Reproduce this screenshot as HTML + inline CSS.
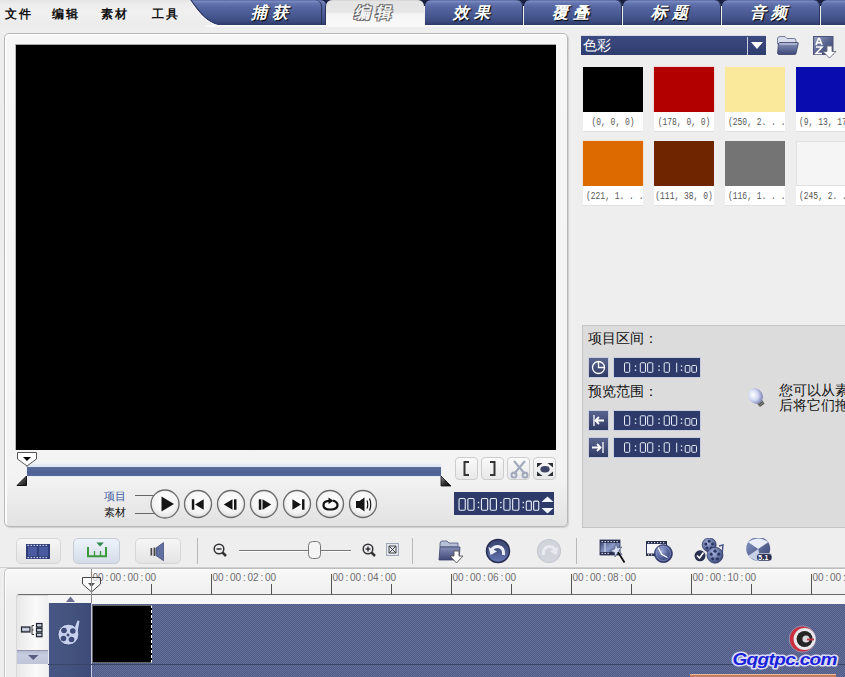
<!DOCTYPE html>
<html><head><meta charset="utf-8">
<style>
*{margin:0;padding:0;box-sizing:border-box}
html,body{width:845px;height:677px;overflow:hidden;background:#eeeeee;font-family:"Liberation Sans",sans-serif;position:relative}
.a{position:absolute}
#menubar{left:0;top:0;width:845px;height:33px;background:linear-gradient(#e4e4e4 0,#ececec 4px,#f0f0f0 12px,#ececec 24px,#efefef 33px)}
.menu{top:5.5px;font-size:12px;font-weight:bold;color:#111;letter-spacing:2px}
#tabbg{left:300px;top:0;width:545px;height:6px;background:#1a2040}
.tab{top:0;height:25px;width:98px;border-radius:6px 6px 0 0;background:linear-gradient(#4a5a90 0,#7e8ec6 1px,#6676b0 3px,#5666a2 7px,#4a5a94 14px,#3c4c82 21px,#2e3a68 25px);box-shadow:inset -1px 0 0 #2a3458;color:#fff;font-size:16px;font-weight:bold;font-style:italic;text-align:center;line-height:25px;letter-spacing:5px;text-shadow:1px 1px 1px #000}
.tab.act{background:linear-gradient(#cfcfcf 0,#e4e4e4 1px,#e6e6e6 12px,#f4f4f4 14px,#fafafa 25px);box-shadow:none;color:#f6f6f6;text-shadow:-1px -1px 0 #666,1px -1px 0 #666,-1px 1px 0 #666,1px 1px 0 #666}
#panel{left:4px;top:33px;width:564px;height:494px;background:linear-gradient(#f6f6f6 0,#f3f3f3 90%,#e2e2e2 100%);border:1px solid #b8b8b8;border-radius:5px;box-shadow:inset 1px 1px 0 #fff,inset 2px 2px 0 #fafafa,1px 1px 1px #cfcfcf}
#preview{left:15px;top:44px;width:541px;height:406px;background:#000;border-top:1px solid #a8a8a8;border-left:1px solid #b8b8b8}
#scrub{left:27px;top:467px;width:414px;height:10px;background:linear-gradient(#5a6c9c,#4e6094 60%,#56689a);border-bottom:1px solid #e4ecf8;box-shadow:0 -3px 2px #dde6f4}
.pbtn{width:28px;height:28px;border-radius:50%;border:1.5px solid #666;background:radial-gradient(circle at 50% 40%,#fff,#f0f0f0 60%,#ddd)}
.sqbtn{top:457px;width:23px;height:23px;border:1px solid #ccc;border-radius:4px;background:linear-gradient(#fafafa,#e8e8e8)}
.tcd{font-family:"Liberation Mono",monospace;font-size:14px;color:#e8eef8;line-height:15px;letter-spacing:0px}.tcd span{font-size:11px}
.tc{background:#2e3b6a;color:#dfe6f5;font-family:"Liberation Mono",monospace}
#rightbox{left:582px;top:325px;width:270px;height:203px;background:#dcdcdc;border:1px solid #c4c4c4;border-right:none}
.sw{width:60px;height:45px}
.lbl{width:60px;height:19px;background:#fff;font-family:"Liberation Mono",monospace;font-size:10.5px;color:#555;line-height:19px;text-align:center;white-space:nowrap;overflow:hidden;box-shadow:0 1px 0 #e0e0e0;position:absolute}.lbl span{position:absolute;top:1px;left:50%;transform:translateX(-50%) scaleX(.76)}.lbl.l span{left:3px;transform:scaleX(.76);transform-origin:0 0}
.tbtn{top:538px;width:45px;height:26px;border:1px solid #d6d6d6;border-radius:5px;background:linear-gradient(#f6f6f6,#e4e4e4)}
.sep{width:1px;height:26px;background:#b8b8b8;top:538px}
#ruler{left:4px;top:568px;width:845px;height:120px;background:linear-gradient(#f8f8f8,#eeeeee 30px,#ececec);border-top:1px solid #bdbdbd;border-left:1px solid #c4c4c4;border-radius:5px 0 0 0;box-shadow:inset 1px 1px 0 #fff}
.rt{top:573px;font-family:"Liberation Mono",monospace;font-size:11px;color:#555}
.tick{width:1px;background:#555}
#track{left:91px;top:603px;width:754px;height:74px;background:repeating-conic-gradient(#636f9a 0 25%,#505c86 0 50%) 0 0/2px 2px;border-top:1px solid #46527c}
</style></head><body>
<div id="menubar" class="a"></div>
<div class="a menu" style="left:5px">文件</div>
<div class="a menu" style="left:52px">编辑</div>
<div class="a menu" style="left:101px">素材</div>
<div class="a menu" style="left:151.5px">工具</div>
<div id="tabbg" class="a"></div>
<svg class="a" style="left:185px;top:0" width="145" height="26"><defs><linearGradient id="tabg" x1="0" y1="0" x2="0" y2="1"><stop offset="0" stop-color="#4a5a90"/><stop offset=".04" stop-color="#7e8ec6"/><stop offset=".12" stop-color="#6676b0"/><stop offset=".3" stop-color="#5666a2"/><stop offset=".56" stop-color="#4a5a94"/><stop offset=".84" stop-color="#3c4c82"/><stop offset="1" stop-color="#2e3a68"/></linearGradient></defs><path d="M5.7 0 H135 Q141 0 141 6 V25 H34.8 C20 22 12 8 5.7 0Z" fill="url(#tabg)"/><path d="M5.7 0 C12 8 20 22 34.8 25" fill="none" stroke="#2a3466" stroke-width="1.2"/><path d="M4.5 0.3 C11 8.5 19 23 34.8 26" fill="none" stroke="#fff" stroke-width="1" opacity=".9"/><path d="M140.5 5 V25" stroke="#2a3458"/></svg>
<div class="a tab" style="left:222px;width:100px;background:none">捕获</div>
<div class="a tab act" style="left:326px">编辑</div>
<div class="a tab" style="left:425px">效果</div>
<div class="a tab" style="left:524px">覆叠</div>
<div class="a tab" style="left:623px">标题</div>
<div class="a tab" style="left:722px">音频</div>
<div class="a tab" style="left:821px;width:40px"></div>
<div class="a" style="left:205px;top:25px;width:640px;height:2px;background:#f8f8f8"></div>

<div id="panel" class="a"></div>
<div id="preview" class="a"></div>
<div id="scrub" class="a"></div>


<!-- playhead marker -->
<svg class="a" style="left:16px;top:451px" width="22" height="36">
<path d="M1.5 1.5 H20.5 V8 L11 15 L1.5 8Z" fill="#fff" stroke="#555" stroke-width="1"/>
<path d="M7 6 H15 L11 10Z" fill="#000"/>
<path d="M11 15 V16" stroke="#777"/>
<defs><linearGradient id="tg" x1="0" y1="0" x2="1" y2="1"><stop offset="0" stop-color="#888"/><stop offset="1" stop-color="#111"/></linearGradient></defs><path d="M1 34.5 L10.5 25 V34.5Z" fill="url(#tg)" stroke="#111" stroke-width="1"/>
</svg>
<svg class="a" style="left:438px;top:474px" width="16" height="14"><defs><linearGradient id="tg2" x1="0" y1="0" x2="1" y2="1"><stop offset="0" stop-color="#999"/><stop offset=".5" stop-color="#333"/><stop offset="1" stop-color="#000"/></linearGradient></defs><path d="M3 2 L13 12 H3Z" fill="url(#tg2)" stroke="#111" stroke-width=".8"/></svg>
<!-- project/clip labels -->
<div class="a" style="left:104px;top:490px;font-size:11px;color:#3a5aa0;line-height:13px">项目</div>
<div class="a" style="left:104px;top:506px;font-size:11px;color:#111;line-height:13px">素材</div>
<div class="a" style="left:135px;top:495px;width:20px;height:1px;background:#666"></div>
<div class="a" style="left:135px;top:513px;width:20px;height:1px;background:#666"></div>
<!-- play buttons -->
<svg class="a" style="left:148px;top:487px" width="240" height="34">
<defs><radialGradient id="pg" cx="50%" cy="40%" r="60%"><stop offset="0" stop-color="#fff"/><stop offset=".7" stop-color="#f4f4f4"/><stop offset="1" stop-color="#dcdcdc"/></radialGradient></defs>
<g stroke="#6a6a6a" stroke-width="1.3" fill="url(#pg)">
<circle cx="17" cy="17" r="14"/><circle cx="50" cy="17" r="13.5"/><circle cx="83" cy="17" r="13.5"/><circle cx="116" cy="17" r="13.5"/><circle cx="149" cy="17" r="13.5"/><circle cx="182" cy="17" r="13.5"/><circle cx="215" cy="17" r="13.5"/>
</g>
<g fill="#151515">
<path d="M13.5 9.5 L26 17 L13.5 24.5Z"/>
<path d="M43.8 12.2 H46.3 V22.8 H43.8Z M47 17.5 L55.7 12.2 V22.8Z"/>
<path d="M75.8 17.5 L84.5 12.2 V22.8Z M86 12.2 H88.5 V22.8 H86Z"/>
<path d="M110.8 12.2 H113.3 V22.8 H110.8Z M114.5 12.2 L123.2 17.5 L114.5 22.8Z"/>
<path d="M144.4 12.2 L153 17.5 L144.4 22.8Z M154 12.2 H156.5 V22.8 H154Z"/>
<path d="M208 14 H211.5 L216.5 10.5 V24.5 L211.5 21 H208Z"/>
</g>
<g fill="none" stroke="#151515">
<path d="M185 13.5 Q189.5 15 189.5 18 Q189.5 22.5 182 22.5 Q175.5 22.5 175.5 18 Q175.5 14 181 13.8" stroke-width="2.2"/>
<path d="M180.5 10.5 L185.5 13.8 L180.5 17Z" fill="#151515" stroke="none"/>
<path d="M219 13.5 Q220.5 17.5 219 21.5 M221.5 11.5 Q224 17.5 221.5 23.5" stroke-width="1.2"/>
</g>
</svg>
<!-- square buttons -->
<div class="a sqbtn" style="left:455px"></div>
<div class="a sqbtn" style="left:481px"></div>
<div class="a sqbtn" style="left:507px"></div>
<div class="a sqbtn" style="left:533px"></div>
<svg class="a" style="left:455px;top:457px" width="102" height="23">
<path d="M14 5 H9.5 V18 H14" fill="none" stroke="#333" stroke-width="2"/>
<path d="M35 5 H39.5 V18 H35" fill="none" stroke="#333" stroke-width="2"/>
<g stroke="#a0a8bc" stroke-width="2" fill="none"><path d="M59 4 L70 17 M70 4 L59 17"/><circle cx="59" cy="18" r="2.5"/><circle cx="70" cy="18" r="2.5"/></g>
<path d="M82 6 H87.5 L82 10.5Z M98 6 H92.5 L98 10.5Z M82 19 H87.5 L82 14.5Z M98 19 H92.5 L98 14.5Z" fill="#2c3038"/><ellipse cx="90" cy="12.3" rx="4.6" ry="3.3" fill="#3e4468"/>
</svg>
<!-- timecode -->
<div class="a tc" style="left:454px;top:492px;width:100px;height:23px"></div>

<svg class="a" style="left:540px;top:494px" width="14" height="22"><path d="M1.5 8 L7.5 2.5 L13.5 8Z M1.5 14 L7.5 19.5 L13.5 14Z" fill="#f2f5fb"/></svg>


<!-- dropdown -->
<div class="a" style="left:581px;top:35px;width:185px;height:20px;background:linear-gradient(#3c4a80,#2f3c6e);border-top:1px solid #d8dce8"></div>
<div class="a" style="left:583px;top:36px;font-size:14px;color:#fff;line-height:19px">色彩</div>
<div class="a" style="left:747px;top:37px;width:1px;height:18px;background:#c8cde0"></div>
<svg class="a" style="left:748px;top:36px" width="19" height="19"><path d="M3 6 H15 L9 13Z" fill="#fff"/></svg>
<!-- folder icon -->
<svg class="a" style="left:776px;top:35px" width="24" height="21">
<defs><linearGradient id="fg" x1="0" y1="0" x2="0" y2="1"><stop offset="0" stop-color="#8a94bc"/><stop offset="1" stop-color="#3e4878"/></linearGradient></defs>
<path d="M1.5 4 Q1.5 1.5 4 1.5 H9 L11 3.5 H18 Q20 3.5 20 5.5 V9 H1.5Z" fill="#d8dcec" stroke="#5a6088" stroke-width=".8"/>
<path d="M1.5 18.5 L2.5 8.5 Q3 7.5 4 7.5 H21.5 Q22.5 7.5 22.3 8.5 L20 18.5 Q19.8 19.5 18.8 19.5 H2.5Z" fill="url(#fg)" stroke="#3a4068" stroke-width=".8"/>
<path d="M3.5 9 H21" stroke="#e8ecf8" stroke-width=".8"/>
</svg>
<!-- sort icon -->
<svg class="a" style="left:812px;top:35px" width="26" height="24">
<defs><linearGradient id="sg" x1="0" y1="0" x2="1" y2="1"><stop offset="0" stop-color="#9aa2c0"/><stop offset=".5" stop-color="#5a6490"/><stop offset="1" stop-color="#3a4470"/></linearGradient></defs>
<rect x="1.5" y="1.5" width="19.5" height="18" fill="url(#sg)" stroke="#4a5278"/>
<path d="M4 10 L6.5 3.5 H7.5 L10 10 M5 7.8 H9" fill="none" stroke="#fff" stroke-width="1.6"/>
<path d="M4 12 H10 L4 18.5 H10" fill="none" stroke="#fff" stroke-width="1.6"/>
<path d="M15 11 H20 V16.5 H24 L17.5 23 L11 16.5 H15Z" fill="#fff" stroke="#6a6a80" stroke-width=".9"/>
</svg>
<!-- swatches -->
<div class="a sw" style="left:583px;top:67px;background:#000"></div>
<div class="a sw" style="left:654px;top:67px;background:#b20000;box-shadow:0 0 2px #f0b0b0"></div>
<div class="a sw" style="left:725px;top:67px;background:#fae99a"></div>
<div class="a sw" style="left:796px;top:67px;background:#090daf"></div>
<div class="a lbl" style="left:583px;top:112px"><span>(0, 0, 0)</span></div>
<div class="a lbl" style="left:654px;top:112px"><span>(178, 0, 0)</span></div>
<div class="a lbl l" style="left:725px;top:112px"><span>(250, 2. . .</span></div>
<div class="a lbl l" style="left:796px;top:112px"><span>(9, 13, 17</span></div>
<div class="a sw" style="left:583px;top:141px;background:#dd6a00;box-shadow:0 0 2px #f8c890"></div>
<div class="a sw" style="left:654px;top:141px;background:#6f2600"></div>
<div class="a sw" style="left:725px;top:141px;background:#747474"></div>
<div class="a sw" style="left:796px;top:141px;background:#f5f5f5;border:1px solid #e2e2e2"></div>
<div class="a lbl l" style="left:583px;top:186px"><span>(221, 1. . .</span></div>
<div class="a lbl" style="left:654px;top:186px"><span>(111, 38, 0)</span></div>
<div class="a lbl l" style="left:725px;top:186px"><span>(116, 1. . .</span></div>
<div class="a lbl l" style="left:796px;top:186px"><span>(245, 2. . .</span></div>

<div id="rightbox" class="a"></div>
<div class="a" style="left:588px;top:330px;font-size:14px;color:#111;line-height:16px">项目区间：</div>
<div class="a" style="left:588px;top:383px;font-size:14px;color:#111;line-height:16px">预览范围：</div>
<svg class="a" style="left:588px;top:357px" width="21" height="102">
<defs><linearGradient id="ig" x1="0" y1="0" x2="0" y2="1"><stop offset="0" stop-color="#5a6690"/><stop offset="1" stop-color="#2e3a64"/></linearGradient></defs>
<g stroke="#c8cde0" stroke-width="1" fill="url(#ig)"><rect x=".5" y=".5" width="20" height="20"/><rect x=".5" y="53.5" width="20" height="20"/><rect x=".5" y="80.5" width="20" height="20"/></g>
<g fill="none" stroke="#fff" stroke-width="1.3"><circle cx="10.5" cy="10.5" r="6"/><path d="M10.5 5 V10.5 H16"/>
<path d="M6 58 V69"/><path d="M16 63.5 H8 M11 60 L7.5 63.5 L11 67" stroke-width="1.8"/>
<path d="M15 85 V96"/><path d="M4 90.5 H12 M9 87 L12.5 90.5 L9 94" stroke-width="1.8"/></g>
</svg>
<div class="a tc" style="left:613px;top:357px;width:88px;height:21px;border:1px solid #c8cde0"></div>
<div class="a tc" style="left:613px;top:410px;width:88px;height:21px;border:1px solid #c8cde0"></div>
<div class="a tc" style="left:613px;top:437px;width:88px;height:21px;border:1px solid #c8cde0"></div>
<svg class="a" style="left:0;top:0" width="845" height="677"><g fill="none" stroke="#e8eef8" stroke-width="1.1"><rect x="459.05" y="498.55" width="6.20" height="11.70" rx="1.17"/><rect x="467.85" y="498.55" width="6.20" height="11.70" rx="1.17"/><rect x="481.45" y="498.55" width="6.20" height="11.70" rx="1.17"/><rect x="490.25" y="498.55" width="6.20" height="11.70" rx="1.17"/><rect x="503.85" y="498.55" width="6.20" height="11.70" rx="1.17"/><rect x="512.65" y="498.55" width="6.20" height="11.70" rx="1.17"/><rect x="526.25" y="501.15" width="5.10" height="9.10" rx="0.99"/><rect x="533.65" y="501.15" width="5.10" height="9.10" rx="0.99"/></g><g fill="#e8eef8"><rect x="477.80" y="501.84" width="1.4" height="1.4"/><rect x="477.80" y="506.70" width="1.4" height="1.4"/><rect x="500.20" y="501.84" width="1.4" height="1.4"/><rect x="500.20" y="506.70" width="1.4" height="1.4"/><rect x="522.60" y="501.84" width="1.4" height="1.4"/><rect x="522.60" y="506.70" width="1.4" height="1.4"/></g><g fill="none" stroke="#e8eef8" stroke-width="1.0"><rect x="624.50" y="362.80" width="5.20" height="9.50" rx="0.99"/><rect x="640.30" y="362.80" width="5.20" height="9.50" rx="0.99"/><rect x="647.60" y="362.80" width="5.20" height="9.50" rx="0.99"/><rect x="664.20" y="362.80" width="5.20" height="9.50" rx="0.99"/><path d="M676.70 362.80 V372.30"/><rect x="685.20" y="365.50" width="4.70" height="6.80" rx="0.91"/><rect x="691.80" y="365.50" width="4.70" height="6.80" rx="0.91"/></g><g fill="#e8eef8"><rect x="634.85" y="365.45" width="1.4" height="1.4"/><rect x="634.85" y="369.44" width="1.4" height="1.4"/><rect x="658.35" y="365.45" width="1.4" height="1.4"/><rect x="658.35" y="369.44" width="1.4" height="1.4"/><rect x="680.80" y="365.45" width="1.4" height="1.4"/><rect x="680.80" y="369.44" width="1.4" height="1.4"/></g><g fill="none" stroke="#e8eef8" stroke-width="1.0"><rect x="624.50" y="415.80" width="5.20" height="9.50" rx="0.99"/><rect x="640.30" y="415.80" width="5.20" height="9.50" rx="0.99"/><rect x="647.60" y="415.80" width="5.20" height="9.50" rx="0.99"/><rect x="664.20" y="415.80" width="5.20" height="9.50" rx="0.99"/><rect x="671.50" y="415.80" width="5.20" height="9.50" rx="0.99"/><rect x="685.20" y="418.50" width="4.70" height="6.80" rx="0.91"/><rect x="691.80" y="418.50" width="4.70" height="6.80" rx="0.91"/></g><g fill="#e8eef8"><rect x="634.85" y="418.45" width="1.4" height="1.4"/><rect x="634.85" y="422.44" width="1.4" height="1.4"/><rect x="658.35" y="418.45" width="1.4" height="1.4"/><rect x="658.35" y="422.44" width="1.4" height="1.4"/><rect x="680.80" y="418.45" width="1.4" height="1.4"/><rect x="680.80" y="422.44" width="1.4" height="1.4"/></g><g fill="none" stroke="#e8eef8" stroke-width="1.0"><rect x="624.50" y="442.80" width="5.20" height="9.50" rx="0.99"/><rect x="640.30" y="442.80" width="5.20" height="9.50" rx="0.99"/><rect x="647.60" y="442.80" width="5.20" height="9.50" rx="0.99"/><rect x="664.20" y="442.80" width="5.20" height="9.50" rx="0.99"/><path d="M676.70 442.80 V452.30"/><rect x="685.20" y="445.50" width="4.70" height="6.80" rx="0.91"/><rect x="691.80" y="445.50" width="4.70" height="6.80" rx="0.91"/></g><g fill="#e8eef8"><rect x="634.85" y="445.45" width="1.4" height="1.4"/><rect x="634.85" y="449.44" width="1.4" height="1.4"/><rect x="658.35" y="445.45" width="1.4" height="1.4"/><rect x="658.35" y="449.44" width="1.4" height="1.4"/><rect x="680.80" y="445.45" width="1.4" height="1.4"/><rect x="680.80" y="449.44" width="1.4" height="1.4"/></g></svg>
<svg class="a" style="left:745px;top:385px" width="24" height="26">
<defs><radialGradient id="bg1" cx="40%" cy="35%" r="65%"><stop offset="0" stop-color="#ffffff"/><stop offset=".55" stop-color="#d0d8f4"/><stop offset="1" stop-color="#8088b8"/></radialGradient></defs>
<g transform="rotate(-35 12 13)">
<rect x="9" y="17" width="6" height="5" rx="1" fill="#555"/>
<path d="M9 18.5 H15 M9 20.5 H15" stroke="#999" stroke-width=".7"/>
<ellipse cx="12" cy="10.5" rx="7" ry="8" fill="url(#bg1)"/>
</g>
</svg>
<div class="a" style="left:779px;top:383px;font-size:14px;color:#111;line-height:15px;white-space:nowrap">您可以从素<br>后将它们拖</div>



<!-- bottom toolbar -->
<div class="a tbtn" style="left:16px;width:45px"></div>
<div class="a tbtn" style="left:73px;width:47px;background:linear-gradient(#eef3fa,#d4dce8);border-color:#c4ccd8"></div>
<div class="a tbtn" style="left:135px;width:46px"></div>
<svg class="a" style="left:16px;top:538px" width="170" height="26">
<rect x="10" y="6" width="24" height="15" fill="#2e3c78"/>
<rect x="12" y="9" width="9" height="9" fill="#4a5aa0"/><rect x="23" y="9" width="9" height="9" fill="#4a5aa0"/>
<g fill="#c8d0f0"><rect x="11.5" y="6.8" width="1.6" height="1.3"/><rect x="14.5" y="6.8" width="1.6" height="1.3"/><rect x="17.5" y="6.8" width="1.6" height="1.3"/><rect x="20.5" y="6.8" width="1.6" height="1.3"/><rect x="23.5" y="6.8" width="1.6" height="1.3"/><rect x="26.5" y="6.8" width="1.6" height="1.3"/><rect x="29.5" y="6.8" width="1.6" height="1.3"/>
<rect x="11.5" y="18.9" width="1.6" height="1.3"/><rect x="14.5" y="18.9" width="1.6" height="1.3"/><rect x="17.5" y="18.9" width="1.6" height="1.3"/><rect x="20.5" y="18.9" width="1.6" height="1.3"/><rect x="23.5" y="18.9" width="1.6" height="1.3"/><rect x="26.5" y="18.9" width="1.6" height="1.3"/><rect x="29.5" y="18.9" width="1.6" height="1.3"/></g>
<path d="M72 9 V18.2 H90 V9" fill="none" stroke="#3a9a3a" stroke-width="2"/>
<path d="M78.5 13 V18 M84.5 13 V18" stroke="#3a9a3a" stroke-width="1.3"/>
<path d="M80.4 4.6 H87.8 L84.1 8.5Z" fill="#2a8a4a"/>
<path d="M134.5 10 H136.2 V17.5 H134.5Z M137.6 9.5 H139.3 V18 H137.6Z" fill="#444"/>
<path d="M140 10 L147.5 4.6 V22.7 L140 17.5Z" fill="#6070a0" stroke="#3a4670" stroke-width=".7"/>
</svg>
<div class="a sep" style="left:197px"></div>
<div class="a sep" style="left:412px"></div>
<div class="a sep" style="left:576px"></div>
<svg class="a" style="left:210px;top:540px" width="195" height="22">
<g fill="none" stroke="#333"><circle cx="9" cy="9" r="4.8" stroke-width="1.5" fill="#f0f0f4"/><path d="M12.5 12.5 L16 16" stroke-width="2.5"/><path d="M6.5 9 H11.5" stroke-width="1.5"/></g>
<g fill="none" stroke="#333"><circle cx="158" cy="9" r="4.8" stroke-width="1.5" fill="#f0f0f4"/><path d="M161.5 12.5 L165 16" stroke-width="2.5"/><path d="M155.5 9 H160.5 M158 6.5 V11.5" stroke-width="1.5"/></g>
<path d="M29 10.5 H141" stroke="#777" stroke-width="1"/><path d="M29 11.5 H141" stroke="#fff" stroke-width="1"/>
<rect x="98.5" y="1.5" width="12" height="17" rx="4" fill="#f4f4f4" stroke="#777"/>
<rect x="176.5" y="3.5" width="12" height="12" fill="#e4e8f0" stroke="#a0a8b8"/>
<path d="M179 6 H186 V13 H179Z M179 6 L186 13 M186 6 L179 13" fill="none" stroke="#333" stroke-width=".9"/>
</svg>
<!-- right toolbar icons -->
<svg class="a" style="left:436px;top:538px" width="345" height="28">
<defs>
<linearGradient id="fg2" x1="0" y1="0" x2="0" y2="1"><stop offset="0" stop-color="#8890b8"/><stop offset="1" stop-color="#3e4878"/></linearGradient>
<linearGradient id="ug" x1="0" y1="0" x2="0" y2="1"><stop offset="0" stop-color="#3a4470"/><stop offset=".5" stop-color="#4a5888"/><stop offset="1" stop-color="#6878b8"/></linearGradient>
</defs>
<path d="M4 6 Q4 3 6 3 H11 L13 5 H22 V9 H4Z" fill="#b8c0d8" stroke="#4a5478" stroke-width=".8"/>
<path d="M3 22 L4 9 H24 L23 22Z" fill="url(#fg2)" stroke="#3a4468" stroke-width=".8"/>
<path d="M18 13 H23 V18 H27 L20.5 25 L14 18 H18Z" fill="#fff" stroke="#555" stroke-width=".9"/>
<circle cx="62" cy="13" r="11.5" fill="url(#ug)" stroke="#262c50" stroke-width="1.5"/>
<path d="M67.5 17 Q68.5 9.5 62 8.5 Q58 8.3 56 11.5" fill="none" stroke="#eef0f8" stroke-width="3"/>
<path d="M52.5 9 L54.5 17 L61 13.5Z" fill="#eef0f8"/>
<circle cx="113" cy="13" r="11.5" fill="#d2d4dc" stroke="#c6c8d0" stroke-width="1.2"/>
<path d="M107.5 17 Q106.5 9.5 113 8.5 Q117 8.3 119 11.5" fill="none" stroke="#e8eaf0" stroke-width="3"/>
<path d="M122.5 9 L120.5 17 L114 13.5Z" fill="#e8eaf0"/>
<defs>
<linearGradient id="fm1" x1="0" y1="0" x2="1" y2="1"><stop offset="0" stop-color="#3a4670"/><stop offset=".5" stop-color="#8a9ac8"/><stop offset="1" stop-color="#3a4670"/></linearGradient>
<radialGradient id="clk" cx="40%" cy="35%" r="70%"><stop offset="0" stop-color="#9aa8d8"/><stop offset=".6" stop-color="#4a5890"/><stop offset="1" stop-color="#2a3468"/></radialGradient>
<radialGradient id="reel" cx="40%" cy="35%" r="70%"><stop offset="0" stop-color="#aab4e0"/><stop offset=".7" stop-color="#5a6898"/><stop offset="1" stop-color="#34406c"/></radialGradient>
<linearGradient id="dsk" x1="0" y1="0" x2="1" y2="1"><stop offset="0" stop-color="#8a98c8"/><stop offset="1" stop-color="#34406c"/></linearGradient>
</defs>
<rect x="164" y="2" width="20" height="15" fill="url(#fm1)" stroke="#2a3050" stroke-width=".8"/>
<rect x="164" y="2" width="20" height="3" fill="#2a3050"/><rect x="164" y="14" width="20" height="3" fill="#2a3050"/>
<g fill="#e8ecf8"><rect x="165.5" y="3" width="1.3" height="1.2"/><rect x="168.5" y="3" width="1.3" height="1.2"/><rect x="171.5" y="3" width="1.3" height="1.2"/><rect x="174.5" y="3" width="1.3" height="1.2"/><rect x="177.5" y="3" width="1.3" height="1.2"/><rect x="180.5" y="3" width="1.3" height="1.2"/>
<rect x="165.5" y="14.8" width="1.3" height="1.2"/><rect x="168.5" y="14.8" width="1.3" height="1.2"/><rect x="171.5" y="14.8" width="1.3" height="1.2"/></g>
<path d="M169 5 V14" stroke="#c8d0f0" stroke-width="1.2"/>
<path d="M180 5 L181.5 10 L186 9 L183 12.5 L186 16.5 L181.5 15 L179 19 L178.5 14.5 L174 13 L178.5 11Z" fill="#d8e0f8" stroke="#4a5478" stroke-width=".7"/>
<path d="M182 14 L188.5 24.5" stroke="#111" stroke-width="1.8"/>
<rect x="210.5" y="3.5" width="20" height="14" fill="#f4f6fc" stroke="#2a3050" stroke-width="1"/>
<rect x="210.5" y="3.5" width="20" height="2.5" fill="#2a3050"/><rect x="210.5" y="15.5" width="20" height="2.5" fill="#2a3050"/>
<g fill="#f0f0f8"><rect x="212" y="4.2" width="1.2" height="1"/><rect x="215" y="4.2" width="1.2" height="1"/><rect x="218" y="4.2" width="1.2" height="1"/><rect x="221" y="4.2" width="1.2" height="1"/><rect x="224" y="4.2" width="1.2" height="1"/><rect x="227" y="4.2" width="1.2" height="1"/><rect x="212" y="16.3" width="1.2" height="1"/><rect x="215" y="16.3" width="1.2" height="1"/></g>
<circle cx="227.4" cy="15.6" r="9" fill="url(#clk)" stroke="#2a3060" stroke-width=".8"/>
<circle cx="227.4" cy="15.6" r="7" fill="none" stroke="#c8d0f0" stroke-width=".6" opacity=".7"/>
<path d="M222 9.5 L226 16.5 L231.5 19.5" fill="none" stroke="#fff" stroke-width="1.3"/>
<circle cx="273.2" cy="6.8" r="7" fill="url(#reel)" stroke="#2a3460" stroke-width=".7"/>
<g fill="#2a3460"><circle cx="273.2" cy="3.3" r="1.5"/><circle cx="276.5" cy="6" r="1.5"/><circle cx="275.2" cy="10" r="1.5"/><circle cx="271" cy="10" r="1.5"/><circle cx="269.8" cy="6" r="1.5"/></g>
<path d="M283 8 L287 7 L286 16" fill="none" stroke="#4a5688" stroke-width="1.5"/>
<circle cx="279" cy="17.2" r="8" fill="url(#reel)" stroke="#2a3460" stroke-width=".7"/>
<g fill="#2a3460"><circle cx="279" cy="13.2" r="1.6"/><circle cx="282.8" cy="16.2" r="1.6"/><circle cx="281.3" cy="20.8" r="1.6"/><circle cx="276.7" cy="20.8" r="1.6"/><circle cx="275.2" cy="16.2" r="1.6"/></g>
<circle cx="264" cy="17.8" r="5.5" fill="#2a3050"/>
<path d="M261 17.5 L263.5 20 L267.5 14.5" fill="none" stroke="#fff" stroke-width="1.6"/>
<circle cx="322.2" cy="10.8" r="12" fill="url(#dsk)"/>
<path d="M312 4 Q322.2 -3 332.4 4 L322.2 11Z" fill="#e8ecf8"/>
<path d="M312 18 L322.2 11 L325 22.8 Q317 23 312 18Z" fill="#c8d0e8"/>
<rect x="320.6" y="15.6" width="15.4" height="7.5" rx="3" fill="#2a3050" stroke="#e8ecf8" stroke-width=".7"/>
<text x="322.3" y="21.6" font-family="Liberation Sans" font-weight="bold" font-size="7" fill="#fff" letter-spacing=".2">5.1</text>
</svg>
<div class="a" style="left:0;top:567px;width:845px;height:1px;background:#d0d0d0"></div>
<div id="ruler" class="a"></div>
<div id="track" class="a"></div>
<div class="a" style="left:16px;top:594px;width:829px;height:10px;background:#f6f6f6;border-top:1px solid #6a6a6a;border-left:1px solid #c8c8c8;border-radius:4px 0 0 0"></div>
<div class="a" style="left:16px;top:595px;width:32px;height:82px;background:linear-gradient(90deg,#e8e8e8,#fafafa 60%,#f0f0f0);border-left:1px solid #d8d8d8;border-top:1px solid #ddd;border-radius:3px 0 0 0"></div>
<div class="a" style="left:17px;top:650px;width:31px;height:14px;background:linear-gradient(#b8bcd0,#c8cce0 30%,#c0c4d8);border-top:1px solid #9094a8"></div>
<svg class="a" style="left:17px;top:596px" width="75" height="81">
<path d="M49 6 L53.5 0.5 L58 6Z" fill="#6a6e90"/>
<path d="M11 59 H21.5 L16.25 64Z" fill="#5a5e80"/>
<defs><linearGradient id="hg" x1="0" y1="0" x2="0" y2="1"><stop offset="0" stop-color="#9aa0b0"/><stop offset=".5" stop-color="#d8dce8"/><stop offset="1" stop-color="#7a8090"/></linearGradient></defs>
<rect x="4.5" y="31" width="8.5" height="5" fill="url(#hg)" stroke="#1e2430" stroke-width="1.2"/>
<path d="M17 29.5 H15 V38.5 H17 M15 34 H16.5" fill="none" stroke="#222" stroke-width=".9"/>
<rect x="19.5" y="27.5" width="5.5" height="3.6" fill="url(#hg)" stroke="#1e2430" stroke-width="1.2"/>
<rect x="19.5" y="32.3" width="5.5" height="3.6" fill="url(#hg)" stroke="#1e2430" stroke-width="1.2"/>
<rect x="19.5" y="37.1" width="5.5" height="3.6" fill="url(#hg)" stroke="#1e2430" stroke-width="1.2"/>
</svg>
<div class="a" style="left:48px;top:603px;width:43px;height:74px;background:linear-gradient(90deg,#485684,#44527e 50%,#3e4b78);border-left:1px solid #e8e8f0"></div><div class="a" style="left:91px;top:603px;width:1px;height:74px;background:#c8cce0"></div>
<div class="a" style="left:48px;top:664px;width:797px;height:1px;background:#3a4468"></div>
<svg class="a" style="left:48px;top:603px" width="43" height="60">
<circle cx="20.4" cy="31.6" r="10.4" fill="#c8d2f0" stroke="#34406a" stroke-width=".8"/>
<g fill="#3e4a78"><circle cx="16" cy="27.5" r="2.8"/><circle cx="24.8" cy="28" r="2.8"/><circle cx="15.5" cy="35.5" r="2.8"/><circle cx="23.5" cy="36.5" r="2.8"/><circle cx="20" cy="32" r="1.5"/></g>
<path d="M27 24 L29.5 17.5 L31.5 18 L29.5 29Z" fill="#c8d2f0"/>
</svg>
<div class="a" style="left:92px;top:605px;width:60px;height:58px;background:#000;border:1px solid #666;border-right:1.5px dashed #fff"></div>
<!-- ruler ticks and labels -->
<svg class="a" style="left:0;top:569px" width="845" height="34">
<g stroke="#555" stroke-width="1">
<path d="M91.5 5 V26 M211.5 5 V26 M331.5 5 V26 M451.5 5 V26 M571.5 5 V26 M691.5 5 V26 M811.5 5 V26"/>
<path d="M151.5 15 V26 M271.5 15 V26 M391.5 15 V26 M511.5 15 V26 M631.5 15 V26 M751.5 15 V26"/>
</g>
<g font-family="Liberation Sans" font-size="10" fill="#6e6e6e"><text x="92.5 98.0 105.4 109.9 115.4 122.9 127.4 132.9 140.4 144.9 150.4" y="12.4">00:00:00:00</text><text x="212.5 218.0 225.4 229.9 235.4 242.9 247.4 252.9 260.4 264.9 270.4" y="12.4">00:00:02:00</text><text x="332.5 338.0 345.4 349.9 355.4 362.9 367.4 372.9 380.4 384.9 390.4" y="12.4">00:00:04:00</text><text x="452.5 458.0 465.4 469.9 475.4 482.9 487.4 492.9 500.4 504.9 510.4" y="12.4">00:00:06:00</text><text x="572.5 578.0 585.4 589.9 595.4 602.9 607.4 612.9 620.4 624.9 630.4" y="12.4">00:00:08:00</text><text x="692.5 698.0 705.4 709.9 715.4 722.9 727.4 732.9 740.4 744.9 750.4" y="12.4">00:00:10:00</text><text x="812.5 818.0 825.4 829.9 835.4 842.9 847.4 852.9 860.4 864.9 870.4" y="12.4">00:00:12:00</text></g>
<path d="M82.5 8.5 H100.5 V15 L91.5 23 L82.5 15Z" fill="#fff" fill-opacity=".6" stroke="#444"/>
<path d="M88 14 H95 L91.5 18Z" fill="#555"/>
<path d="M91.5 0 V34" stroke="#8a8a8a"/>
</svg>
<!-- watermark -->
<svg class="a" style="left:726px;top:622px" width="115" height="48">
<circle cx="76.4" cy="17" r="12.6" fill="#c83040"/><circle cx="76.4" cy="17" r="13.2" fill="none" stroke="#f0c8d0" stroke-width=".8" opacity=".5"/>
<circle cx="78.6" cy="17" r="11" fill="#e8e8ec"/><circle cx="78.6" cy="17" r="8" fill="#252525"/><circle cx="80" cy="17" r="3.6" fill="#d8d8dc"/><path d="M81 17.5 H88" stroke="#c83040" stroke-width="1.8"/>
<text x="0" y="0" transform="translate(6.5 43) scale(1.12 0.92)" font-family="Liberation Sans" font-weight="bold" font-style="italic" font-size="17" fill="#1a22d8" stroke="#dcdcf8" stroke-width="3.2" paint-order="stroke" stroke-linejoin="round" letter-spacing="-.6">Gqgtpc.com</text>
</svg>
<div class="a" style="left:690px;top:674px;width:146px;height:3px;background:#c87a5a;border-top:1px solid #e8b8a0"></div>

</body></html>
